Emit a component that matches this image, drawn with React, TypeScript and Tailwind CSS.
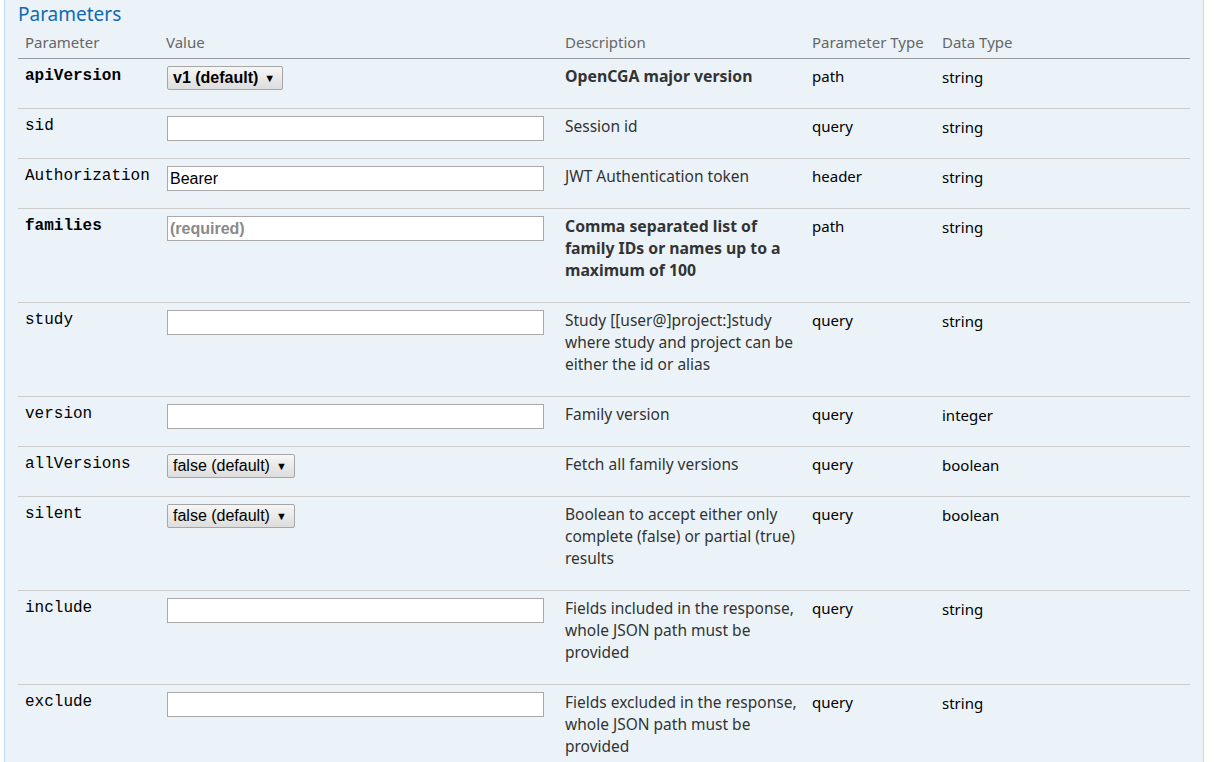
type Param = {
  name: string;
  required?: boolean;
  kind: 'input' | 'select';
  value?: string;
  placeholder?: string;
  boldSelect?: boolean;
  desc: string[];
  boldDesc?: boolean;
  paramType: string;
  dataType: string;
};

const params: Param[] = [
  { name: 'apiVersion', required: true, kind: 'select', value: 'v1 (default)', boldSelect: true, desc: ['OpenCGA major version'], boldDesc: true, paramType: 'path', dataType: 'string' },
  { name: 'sid', kind: 'input', desc: ['Session id'], paramType: 'query', dataType: 'string' },
  { name: 'Authorization', kind: 'input', value: 'Bearer', desc: ['JWT Authentication token'], paramType: 'header', dataType: 'string' },
  { name: 'families', required: true, kind: 'input', placeholder: '(required)', desc: ['Comma separated list of', 'family IDs or names up to a', 'maximum of 100'], boldDesc: true, paramType: 'path', dataType: 'string' },
  { name: 'study', kind: 'input', desc: ['Study [[user@]project:]study', 'where study and project can be', 'either the id or alias'], paramType: 'query', dataType: 'string' },
  { name: 'version', kind: 'input', desc: ['Family version'], paramType: 'query', dataType: 'integer' },
  { name: 'allVersions', kind: 'select', value: 'false (default)', desc: ['Fetch all family versions'], paramType: 'query', dataType: 'boolean' },
  { name: 'silent', kind: 'select', value: 'false (default)', desc: ['Boolean to accept either only', 'complete (false) or partial (true)', 'results'], paramType: 'query', dataType: 'boolean' },
  { name: 'include', kind: 'input', desc: ['Fields included in the response,', 'whole JSON path must be', 'provided'], paramType: 'query', dataType: 'string' },
  { name: 'exclude', kind: 'input', desc: ['Fields excluded in the response,', 'whole JSON path must be', 'provided'], paramType: 'query', dataType: 'string' },
];

function ValueCell({ p }: { p: Param }) {
  if (p.kind === 'select') {
    return (
      <div
        className={`flex h-[24px] items-center gap-[6px] rounded-[2px] border border-[#a6a6a6] bg-gradient-to-b from-[#f6f6f6] to-[#dddddd] pl-[5px] pr-[7px] text-[16px] leading-[20px] text-black font-['Liberation_Sans',sans-serif] ${p.boldSelect ? 'font-bold' : ''}`}
      >
        <span>{p.value}</span>
        <span className="text-[11px]">▼</span>
      </div>
    );
  }
  return (
    <div className="flex h-[25px] w-[377px] items-center border border-[#a9a9a9] bg-white pl-[2px] text-[16px] leading-[20px] font-['Liberation_Sans',sans-serif]">
      {p.value && <span className="text-black">{p.value}</span>}
      {p.placeholder && <span className="font-bold text-[#8a8a8a]">{p.placeholder}</span>}
    </div>
  );
}

export default function App() {
  return (
    <div className="min-h-[762px] w-full bg-white pl-[4px] pr-[17px] font-['Noto_Sans',sans-serif]">
      <div className="min-h-[762px] border-x border-[#c3d9ec] bg-[#ebf3f9] px-[13px]">
        <h4 className="pt-[1px] text-[19px] leading-[26px] text-[#0f6ab4]">Parameters</h4>
        <div className="mt-[5px] grid grid-cols-[141px_399px_247px_130px_1fr] border-b border-[#999] pb-[6px] pl-[7px] text-[15px] leading-[20px] text-[#666]">
          <div>Parameter</div>
          <div>Value</div>
          <div>Description</div>
          <div>Parameter Type</div>
          <div>Data Type</div>
        </div>
        {params.map((p) => (
          <div
            key={p.name}
            className="grid grid-cols-[141px_399px_247px_130px_1fr] items-start border-b border-[#cccccc] pb-[17px] pl-[7px] pt-[7px] text-[15px] leading-[22px]"
          >
            <div className={`font-['Liberation_Mono',monospace] text-[16px] leading-[20px] text-black ${p.required ? 'font-bold' : ''}`}>
              {p.name}
            </div>
            <div className="flex pl-[1px]">
              <ValueCell p={p} />
            </div>
            <div className={`-mt-px pb-[4px] pr-[6px] text-[#333] ${p.boldDesc ? 'font-bold text-[15.8px]' : 'text-[15.5px]'}`}>
              {p.desc.map((line) => (
                <div key={line} className="whitespace-nowrap">{line}</div>
              ))}
            </div>
            <div className="-mt-px text-black">{p.paramType}</div>
            <div className="text-black">{p.dataType}</div>
          </div>
        ))}
      </div>
    </div>
  );
}
